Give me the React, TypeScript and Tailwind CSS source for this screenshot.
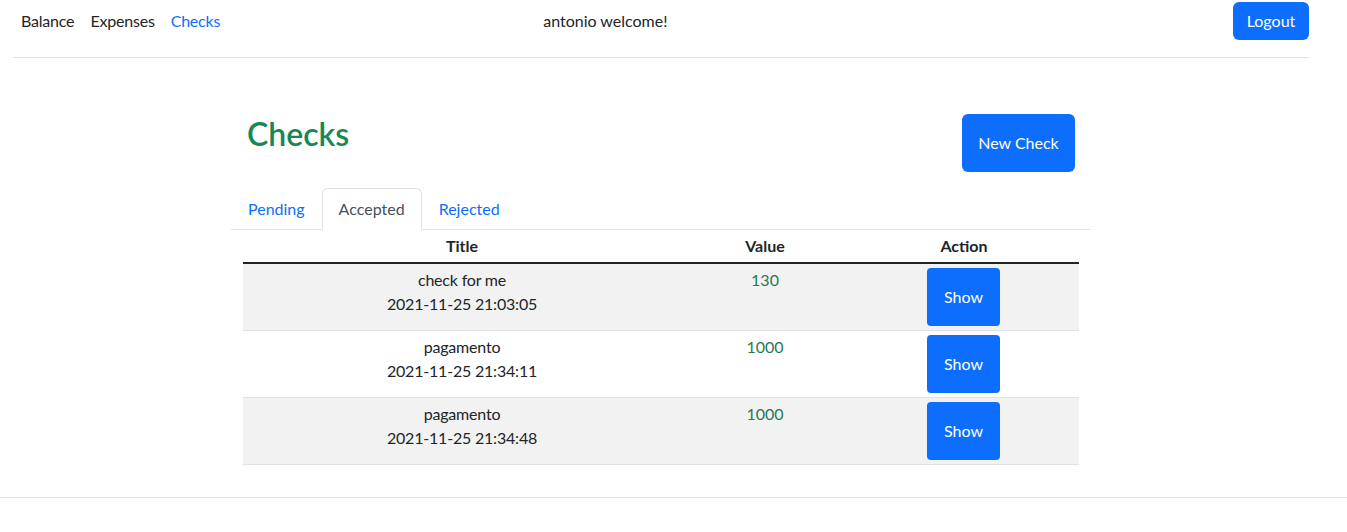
import React from 'react';

interface Check {
  title: string;
  date: string;
  value: number;
}

const checks: Check[] = [
  { title: 'check for me', date: '2021-11-25 21:03:05', value: 130 },
  { title: 'pagamento', date: '2021-11-25 21:34:11', value: 1000 },
  { title: 'pagamento', date: '2021-11-25 21:34:48', value: 1000 },
];

const App: React.FC = () => {
  return (
    <div
      className="min-h-screen bg-white text-[16px] leading-6 text-[#212529]"
      style={{ fontFamily: '"Segoe UI", Lato, "Noto Sans", sans-serif' }}
    >
      {/* Navbar */}
      <nav className="ml-[13px] w-[1296px] h-[58px] border-b border-[#dee2e6] flex items-start pt-[2px]">
        <div className="flex items-center h-[38px] tracking-[-0.2px]">
          <a className="px-2 text-[#212529]">Balance</a>
          <a className="px-2 text-[#212529]">Expenses</a>
          <a className="px-2 text-[#0d6efd]">Checks</a>
        </div>
        <div className="flex-1 flex items-center h-[38px]">
          <span className="ml-[315px]">antonio welcome!</span>
        </div>
        <button className="h-[38px] w-[76px] rounded-md bg-[#0d6efd] text-white">Logout</button>
      </nav>

      {/* Main */}
      <main className="ml-[231px] w-[860px] pt-[56px]">
        <div className="flex items-start justify-between px-[12px]">
          <h1 className="ml-[4px] mt-[1px] text-[32px] leading-[38px] font-semibold text-[#198754]">Checks</h1>
          <button className="mr-[4px] w-[113px] h-[58px] rounded-md bg-[#0d6efd] text-white">New Check</button>
        </div>

        {/* Tabs */}
        <div className="mt-[16px] flex border-b border-[#dee2e6]">
          <a className="px-4 py-2 -mb-px border border-transparent text-[#0d6efd]">Pending</a>
          <a className="px-4 py-2 -mb-px border border-[#dee2e6] border-b-white rounded-t-md bg-white text-[#495057]">
            Accepted
          </a>
          <a className="px-4 py-2 -mb-px border border-transparent text-[#0d6efd]">Rejected</a>
        </div>

        {/* Table */}
        <div className="mx-[12px]">
          <table className="w-full border-collapse text-center">
            <thead>
              <tr className="border-b-2 border-[#212529]">
                <th className="w-[438px] py-[4px] font-bold">Title</th>
                <th className="w-[168px] py-[4px] font-bold">Value</th>
                <th className="py-[4px] font-bold">Action</th>
              </tr>
            </thead>
            <tbody>
              {checks.map((c, i) => (
                <tr
                  key={i}
                  className={`border-b border-[#dee2e6] ${i % 2 === 0 ? 'bg-[#f2f2f2]' : 'bg-white'}`}
                >
                  <td className="align-top py-[4px] tracking-[-0.2px]">
                    <div>{c.title}</div>
                    <div>{c.date}</div>
                  </td>
                  <td className="align-top py-[4px] text-[#1f7a55]">{c.value}</td>
                  <td className="align-top py-[4px] pr-[1px]">
                    <button className="w-[73px] h-[58px] rounded-[4px] bg-[#0d6efd] text-white">Show</button>
                  </td>
                </tr>
              ))}
            </tbody>
          </table>
        </div>
      </main>

      <div className="mt-[32px] border-t border-[#dee2e6]" />
    </div>
  );
};

export default App;
